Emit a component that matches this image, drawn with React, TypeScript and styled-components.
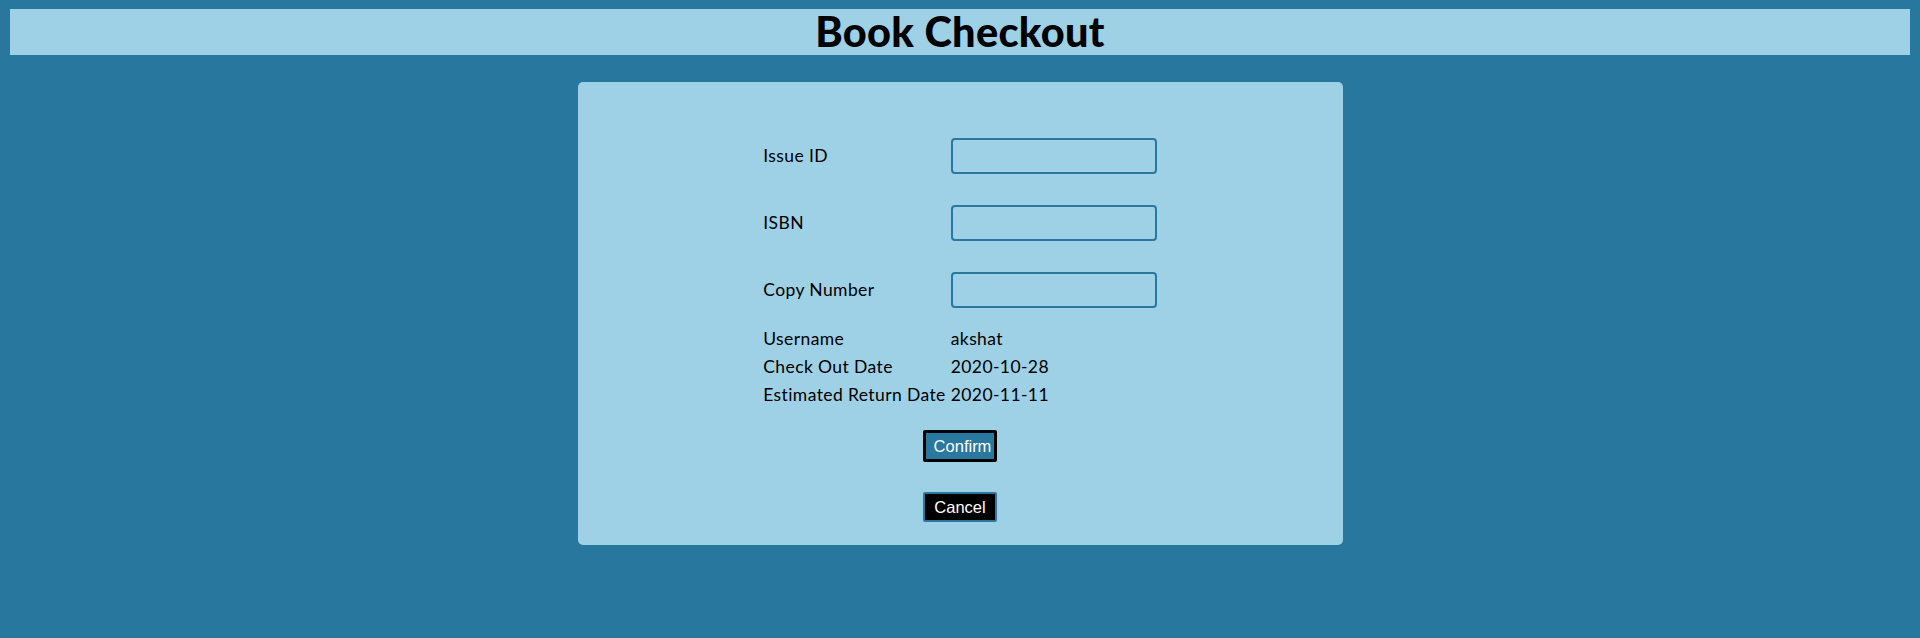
import React from "react";
import styled, { createGlobalStyle } from "styled-components";

const Global = createGlobalStyle`
  html, body {
    margin: 0;
    padding: 0;
    background: #28779e;
  }
  body {
    font-family: Lato, "Open Sans", sans-serif;
    color: #000;
  }
`;

const Page = styled.div`
  min-height: 638px;
  padding: 9px 10px 0;
  box-sizing: border-box;
  display: flex;
  flex-direction: column;
  align-items: center;
`;

const Header = styled.header`
  align-self: stretch;
  height: 46px;
  background: #9ed0e6;
  display: flex;
  align-items: center;
  justify-content: center;
`;

const Title = styled.h1`
  margin: 0;
  font-family: Lato, sans-serif;
  font-weight: 900;
  font-size: 41.5px;
  line-height: 1;
  letter-spacing: 0.3px;
`;

const Card = styled.main`
  margin-top: 27px;
  width: 765px;
  box-sizing: border-box;
  background: #9ed0e6;
  border-radius: 5px;
  padding: 40px 0 23px;
  display: flex;
  flex-direction: column;
  align-items: center;
`;

const Form = styled.div`
  display: grid;
  grid-template-columns: auto 206px;
  column-gap: 5px;
  font-family: Lato, sans-serif;
  font-size: 17.5px;
  letter-spacing: 0.4px;
`;

const Cell = styled.div<{ $tall?: boolean; $padTop?: number; $padBottom?: number }>`
  height: ${(p) =>
    p.$tall ? "67px" : `${28 + (p.$padTop ?? 0) + (p.$padBottom ?? 0)}px`};
  padding-top: ${(p) => p.$padTop ?? 0}px;
  padding-bottom: ${(p) => p.$padBottom ?? 0}px;
  box-sizing: border-box;
  display: flex;
  align-items: center;
  white-space: nowrap;
`;

const Input = styled.input`
  width: 206px;
  height: 36px;
  box-sizing: border-box;
  border: 2px solid #2a77a0;
  border-radius: 4px;
  background: transparent;
  outline: none;
  font-family: Lato, sans-serif;
  font-size: 16px;
  padding: 0 8px;
`;

const Buttons = styled.div`
  margin-top: 20px;
  display: flex;
  flex-direction: column;
  align-items: center;
  gap: 30px;
`;

const Button = styled.button<{ $variant: "confirm" | "cancel" }>`
  width: 74px;
  height: ${(p) => (p.$variant === "confirm" ? "32px" : "30px")};
  box-sizing: border-box;
  border: ${(p) =>
    p.$variant === "confirm" ? "3px solid #000" : "2px solid #2a77a0"};
  border-radius: 2px;
  background: ${(p) => (p.$variant === "confirm" ? "#28789f" : "#000")};
  color: #fff;
  font-family: Arial, "Liberation Sans", sans-serif;
  font-size: 16.5px;
  padding: 0 0 0 ${(p) => (p.$variant === "confirm" ? "5px" : "0")};
  cursor: pointer;
`;

const fields = ["Issue ID", "ISBN", "Copy Number"];
const info: [string, string][] = [
  ["Username", "akshat"],
  ["Check Out Date", "2020-10-28"],
  ["Estimated Return Date", "2020-11-11"],
];

export default function App() {
  return (
    <>
      <Global />
      <Page>
        <Header>
          <Title>Book Checkout</Title>
        </Header>
        <Card>
          <Form>
            {fields.map((f) => (
              <React.Fragment key={f}>
                <Cell $tall>{f}</Cell>
                <Cell $tall>
                  <Input type="text" />
                </Cell>
              </React.Fragment>
            ))}
            {info.map(([k, v], i) => {
              const padTop = i === 0 ? 1 : 0;
              const padBottom = i === info.length - 1 ? 2 : 0;
              return (
                <React.Fragment key={k}>
                  <Cell $padTop={padTop} $padBottom={padBottom}>
                    {k}
                  </Cell>
                  <Cell $padTop={padTop} $padBottom={padBottom}>
                    {v}
                  </Cell>
                </React.Fragment>
              );
            })}
          </Form>
          <Buttons>
            <Button $variant="confirm">Confirm</Button>
            <Button $variant="cancel">Cancel</Button>
          </Buttons>
        </Card>
      </Page>
    </>
  );
}
